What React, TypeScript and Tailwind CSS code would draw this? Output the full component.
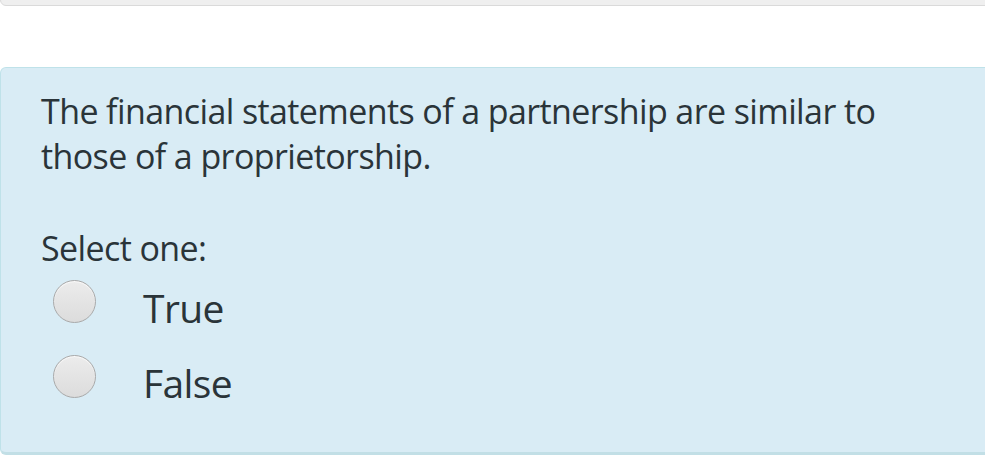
import React from 'react';

const options = ['True', 'False'];

function Radio() {
  return (
    <span className="block h-[43px] w-[43px] shrink-0 rounded-full border border-[#a9a9a9] bg-gradient-to-b from-[#ececec] to-[#dcdcdc] shadow-[inset_0_1px_1px_rgba(255,255,255,0.8)]"></span>
  );
}

export default function App() {
  return (
    <div className="h-[472px] w-[985px] overflow-hidden bg-white font-['Open_Sans',sans-serif] text-[#2a3439] [font-variant-ligatures:none]">
      {/* previous question box, only its bottom edge is visible */}
      <div className="-mt-[40px] h-[46px] w-[1000px] rounded-b-[6px] border border-[#dadada] bg-[#efefef]"></div>

      {/* question card */}
      <div className="mt-[61px] w-[1000px] rounded-[6px] border border-[#bfe2e9] border-b-[3px] border-b-[#c2dfe6] bg-[#d9ecf5] pl-[40px] pt-[21px] pb-[47px]">
        <p className="w-[880px] text-[34px] leading-[45px] tracking-[-0.6px]">
          The financial statements of a partnership are similar to those of a proprietorship.
        </p>
        <div className="mt-[47px] text-[34px] leading-[45px] tracking-[-0.6px]">Select one:</div>
        <div className="mt-[14px] flex flex-col gap-[30px]">
          {options.map((o) => (
            <label key={o} className="flex items-start">
              <span className="-mt-[5px] ml-[12px]">
                <Radio />
              </span>
              <span className="ml-[47px] text-[39px] leading-[45px] tracking-[-0.6px]">{o}</span>
            </label>
          ))}
        </div>
      </div>
    </div>
  );
}
